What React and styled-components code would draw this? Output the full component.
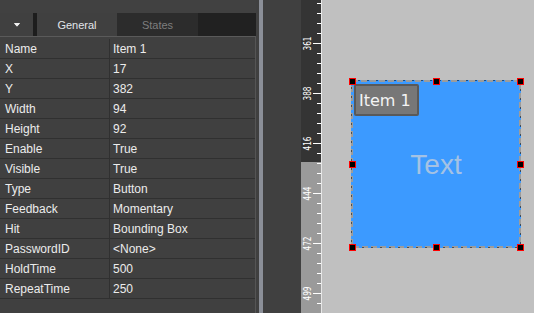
import React from "react";
import styled, { createGlobalStyle } from "styled-components";

const GlobalStyle = createGlobalStyle`
  html, body {
    margin: 0;
    padding: 0;
    background: #404040;
    overflow: hidden;
  }
  * {
    box-sizing: border-box;
  }
`;

const Screen = styled.div`
  display: flex;
  width: 534px;
  height: 313px;
  background: #404040;
  font-family: "Liberation Sans", Arial, sans-serif;
  overflow: hidden;
`;

const LeftPanel = styled.div`
  display: flex;
  flex-direction: column;
  width: 256px;
  flex-shrink: 0;
`;

const TopStrip = styled.div`
  height: 13px;
  background: #414141;
`;

const TabBar = styled.div`
  display: flex;
  height: 23px;
`;

const DropTab = styled.div`
  display: flex;
  align-items: center;
  justify-content: center;
  width: 33px;
  background: #404040;
`;

const TabSep = styled.div`
  width: 4px;
  background: #1d1d1d;
`;

const Tab = styled.div`
  display: flex;
  align-items: center;
  justify-content: center;
  width: ${(p) => p.$w}px;
  background: ${(p) => (p.$active ? "#404040" : "#2c2c2c")};
  color: ${(p) => (p.$active ? "#e2e6ea" : "#7e7e7e")};
  font-size: 11px;
  padding-top: 1px;
`;

const TabFill = styled.div`
  flex: 1;
  background: #212121;
`;

const PropTable = styled.div`
  flex: 1;
  border-top: 1px solid #5a5a5a;
  border-right: 1px solid #555;
  padding-top: 2px;
`;

const Row = styled.div`
  display: grid;
  grid-template-columns: 110px 1fr;
  height: 20px;
  border-bottom: 1px solid #303030;
  color: #ececec;
  font-size: 12px;
`;

const Cell = styled.div`
  display: flex;
  align-items: center;
  padding-left: ${(p) => (p.$value ? "3px" : "5px")};
  border-right: ${(p) => (p.$value ? "none" : "1px solid #303030")};
  white-space: nowrap;
`;

const Splitter = styled.div`
  width: 4px;
  margin-left: 3px;
  flex-shrink: 0;
  background: #8b8f98;
`;

const Gutter = styled.div`
  width: 38px;
  flex-shrink: 0;
`;

const Ruler = styled.div`
  width: 21px;
  flex-shrink: 0;
  border-right: 1px solid #e6e6e6;
  background: #9a9a9a;
  svg {
    display: block;
  }
`;

const Canvas = styled.div`
  position: relative;
  flex: 1;
  background: #c0c0c0;
`;

const Widget = styled.div`
  position: absolute;
  left: 29px;
  top: 80px;
  width: 170px;
  height: 168px;
  background: #3c9aff;
  display: flex;
  align-items: center;
  justify-content: center;
`;

const Frame = styled.svg`
  position: absolute;
  left: 0;
  top: 0;
  overflow: visible;
`;

const WidgetText = styled.span`
  font-family: "Liberation Sans", Arial, sans-serif;
  font-size: 28px;
  color: #a4c2e4;
  margin-top: 1px;
`;

const NameBadge = styled.div`
  position: absolute;
  left: 3px;
  top: 4px;
  width: 65px;
  height: 32px;
  display: flex;
  align-items: center;
  padding-left: 3px;
  background: #777777;
  border: 2px solid #595959;
  border-radius: 2px;
  color: #f4f4f4;
  font-family: "DejaVu Sans", sans-serif;
  font-size: 16px;
`;

const Handle = styled.div`
  position: absolute;
  left: ${(p) => p.$x - 3}px;
  top: ${(p) => p.$y - 3}px;
  width: 7px;
  height: 7px;
  background: #000;
  border: 1px solid #ff0000;
`;

const rows = [
  ["Name", "Item 1"],
  ["X", "17"],
  ["Y", "382"],
  ["Width", "94"],
  ["Height", "92"],
  ["Enable", "True"],
  ["Visible", "True"],
  ["Type", "Button"],
  ["Feedback", "Momentary"],
  ["Hit", "Bounding Box"],
  ["PasswordID", "<None>"],
  ["HoldTime", "500"],
  ["RepeatTime", "250"],
];

const labels = ["361", "388", "416", "444", "472", "499"];

function RulerDrawing() {
  const ticks = [];
  for (let i = 0; i < 32; i++) {
    const y = 3.5 + i * 10;
    const major = (i - 4) % 5 === 0;
    ticks.push(
      <line key={i} x1={major ? 12 : 16} x2={20} y1={y} y2={y} stroke="#fff" strokeWidth="1" />
    );
  }
  return (
    <svg width="20" height="313">
      <rect x="0" y="0" width="20" height="162" fill="#343434" />
      <rect x="0" y="162" width="20" height="151" fill="#9a9a9a" />
      {ticks}
      {labels.map((t, k) => (
        <text
          key={t}
          transform={`translate(9.5, ${43.5 + k * 50}) rotate(-90)`}
          textAnchor="middle"
          fontFamily="DejaVu Sans, sans-serif"
          fontSize="10.5"
          fill="#ffffff"
          textLength="14"
          lengthAdjust="spacingAndGlyphs"
        >
          {t}
        </text>
      ))}
    </svg>
  );
}

const handles = [
  [30, 81], [114, 81], [198, 81],
  [30, 164], [198, 164],
  [30, 247], [114, 247], [198, 247],
];

export default function App() {
  return (
    <>
      <GlobalStyle />
      <Screen>
        <LeftPanel>
          <TopStrip />
          <TabBar>
            <DropTab>
              <svg width="8" height="6" viewBox="0 0 8 6">
                <path d="M1.5 1.5 L4 4.2 L6.5 1.5 Z" fill="#f0f0f0" stroke="#f0f0f0" strokeWidth="1" />
              </svg>
            </DropTab>
            <TabSep />
            <Tab $active $w={80}>General</Tab>
            <Tab $w={81}>States</Tab>
            <TabFill />
          </TabBar>
          <PropTable>
            {rows.map(([k, v]) => (
              <Row key={k}>
                <Cell>{k}</Cell>
                <Cell $value>{v}</Cell>
              </Row>
            ))}
          </PropTable>
        </LeftPanel>
        <Splitter />
        <Gutter />
        <Ruler>
          <RulerDrawing />
        </Ruler>
        <Canvas>
          <Widget>
            <Frame width="170" height="168">
              <rect x="1" y="1" width="168" height="166" fill="none" stroke="#9c9c9c" strokeWidth="2" strokeDasharray="6 3" />
              <rect x="0.5" y="0.5" width="169" height="167" fill="none" stroke="#000" strokeWidth="1" strokeDasharray="1 8" strokeDashoffset="-7" />
            </Frame>
            <NameBadge>Item 1</NameBadge>
            <WidgetText>Text</WidgetText>
          </Widget>
          {handles.map(([x, y]) => (
            <Handle key={`${x}-${y}`} $x={x} $y={y} />
          ))}
        </Canvas>
      </Screen>
    </>
  );
}
